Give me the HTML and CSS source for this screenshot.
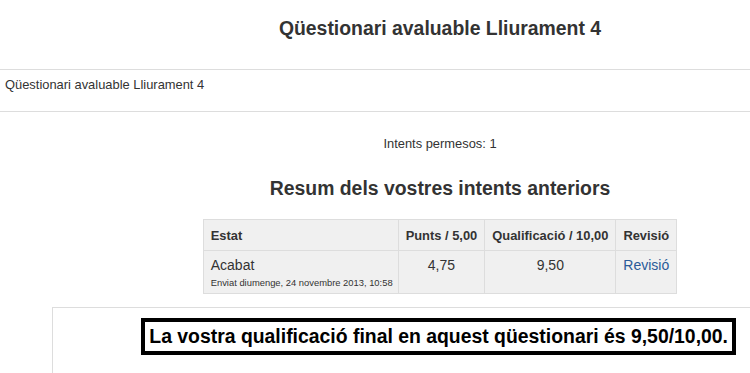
FILE: index.html
```html
<!doctype html>
<html lang="ca">
<head>
    <meta charset="UTF-8">
    <title>Qüestionari avaluable Lliurament 4</title>
    <link rel="stylesheet" href="styles.css">
</head>
<body>
<div class="page-header">
    <h1>Qüestionari avaluable Lliurament 4</h1>
</div>
<div class="navbar">
    <span>Qüestionari avaluable Lliurament 4</span>
</div>
<div class="main">
    <p class="attempts">Intents permesos: 1</p>
    <h3>Resum dels vostres intents anteriors</h3>
    <table class="summary">
        <tr>
            <th class="left">Estat</th>
            <th>Punts / 5,00</th>
            <th>Qualificació / 10,00</th>
            <th>Revisió</th>
        </tr>
        <tr>
            <td class="left">Acabat<br /><span class="date">Enviat diumenge, 24 novembre 2013, 10:58</span></td>
            <td>4,75</td>
            <td>9,50</td>
            <td><a href="#">Revisió</a></td>
        </tr>
    </table>
</div>
<div class="feedback">
    <div class="final">La vostra qualificació final en aquest qüestionari és 9,50/10,00.</div>
</div>
</body>
</html>
```
FILE: styles.css
```css
*{
    padding: 0;
    margin: 0;
}
body{
    font-family: "Liberation Sans", Arial, sans-serif;
    color: #333;
    background-color: #fff;
    overflow: hidden;
}
.page-header{
    height: 69px;
    padding-left: 130px;
    text-align: center;
}
.page-header h1{
    font-size: 19.4px;
    line-height: 22px;
    padding-top: 17px;
}
.navbar{
    border-top: 1px solid #ddd;
    border-bottom: 1px solid #ddd;
    height: 41px;
    padding-left: 5px;
    font-size: 12.9px;
    line-height: 29px;
}
.main{
    padding-left: 130px;
    text-align: center;
}
.attempts{
    font-size: 12.9px;
    line-height: 16px;
    padding-top: 24px;
}
h3{
    font-size: 19.4px;
    line-height: 22px;
    margin-top: 25px;
}
.summary{
    border-collapse: collapse;
    margin: 20px auto 0;
    background-color: #f0f0f0;
}
.summary th, .summary td{
    border: 1px solid #ddd;
    text-align: center;
    vertical-align: top;
}
.summary th{
    font-size: 12.9px;
    line-height: 17px;
    padding: 7px 7px 6px;
}
.summary td{
    font-size: 14px;
    line-height: 16px;
    padding: 6px 7px 3px;
}
.summary .left{
    text-align: left;
    padding-left: 7px;
    padding-right: 5px;
}
.date{
    font-size: 9.4px;
    line-height: 15px;
}
a{
    color: #2a5a98;
    text-decoration: none;
}
.feedback{
    margin-top: 13px;
    margin-left: 52px;
    border-top: 1px solid #ddd;
    border-left: 1px solid #ddd;
    height: 80px;
    display: flex;
    justify-content: flex-end;
    padding-right: 14px;
}
.final{
    margin-top: 10px;
    height: 29px;
    border: 4px solid #000;
    padding: 0 4px;
    font-size: 19.4px;
    font-weight: bold;
    line-height: 29px;
    color: #000;
}
```
